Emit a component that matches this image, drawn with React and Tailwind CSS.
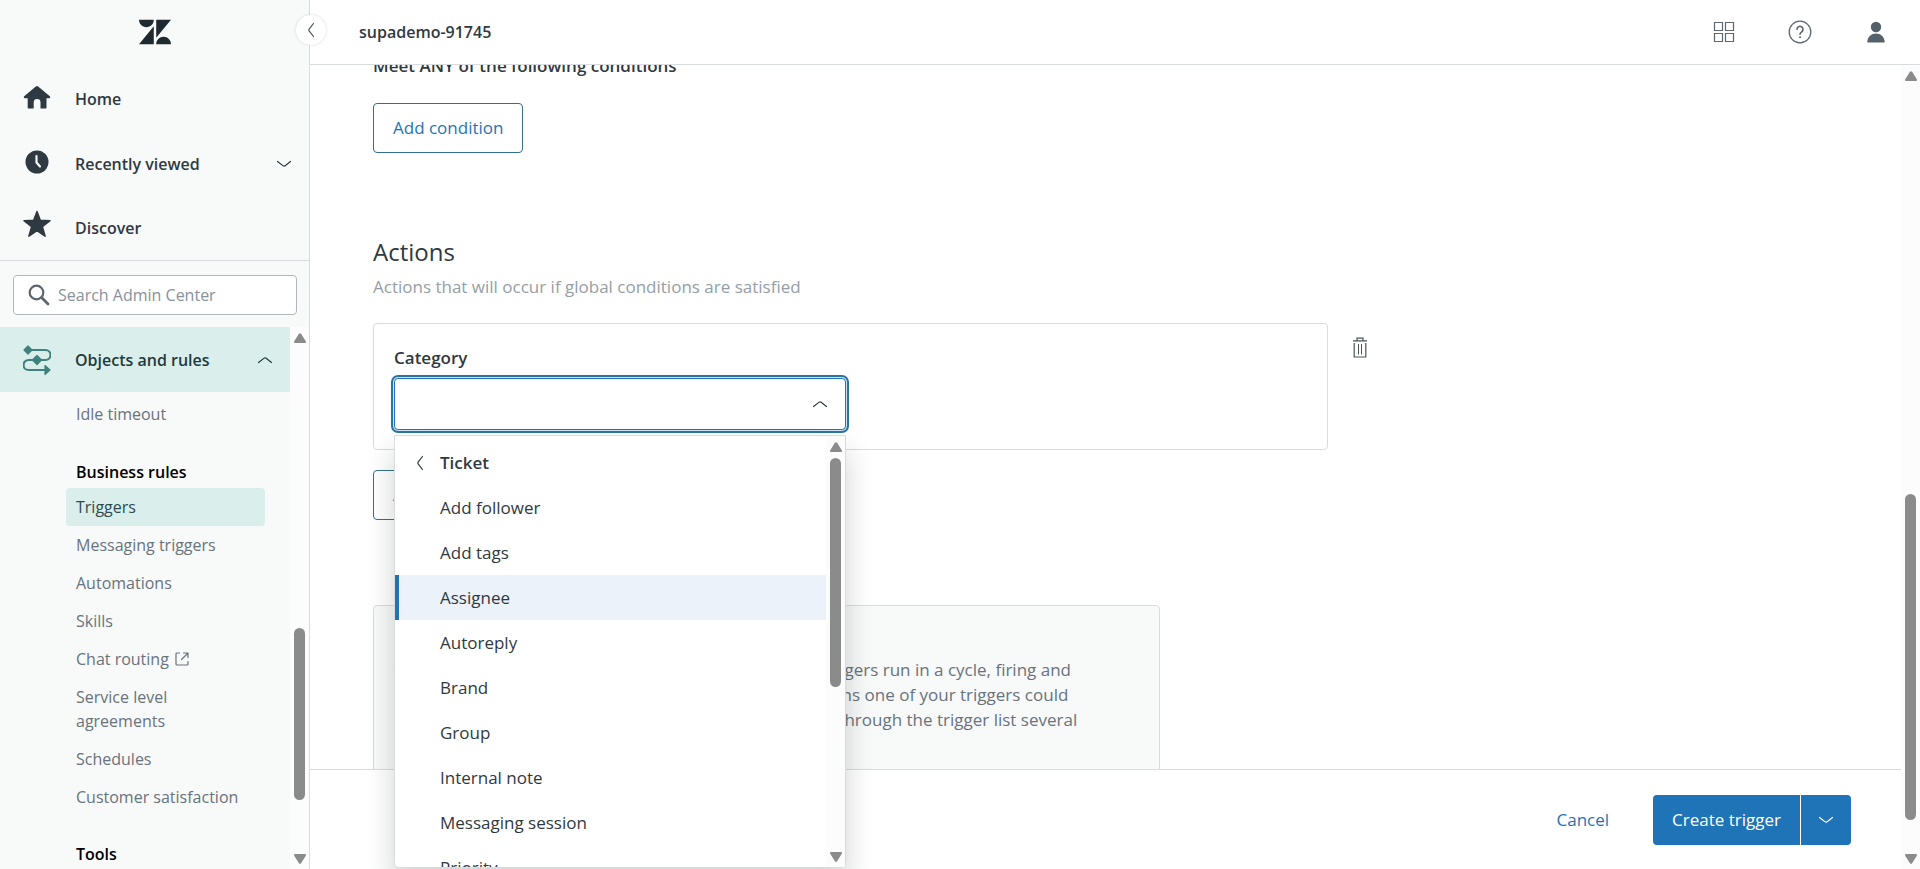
import { useState } from 'react';
import { SiZendesk } from 'react-icons/si';
import clsx from 'clsx';

const businessRules = [
  { label: 'Triggers', active: true },
  { label: 'Messaging triggers' },
  { label: 'Automations' },
  { label: 'Skills' },
  { label: 'Chat routing', external: true },
  { label: 'Service level agreements' },
  { label: 'Schedules' },
  { label: 'Customer satisfaction' },
];

const ticketActions = [
  'Add follower',
  'Add tags',
  'Assignee',
  'Autoreply',
  'Brand',
  'Group',
  'Internal note',
  'Messaging session',
  'Priority',
];

function Chevron({ direction = 'down', className }) {
  const paths = {
    down: 'M1.5 5.5 L7.2 9.9 Q8 10.5 8.8 9.9 L14.5 5.5',
    up: 'M1.5 10.5 L7.2 6.1 Q8 5.5 8.8 6.1 L14.5 10.5',
    left: 'M10.5 1.5 L6.1 7.2 Q5.5 8 6.1 8.8 L10.5 14.5',
  };
  return (
    <svg viewBox="0 0 16 16" className={clsx('size-4 shrink-0', className)} fill="none" stroke="currentColor" strokeWidth="1.2" strokeLinecap="round" aria-hidden="true">
      <path d={paths[direction]} />
    </svg>
  );
}

function HomeIcon() {
  return (
    <svg viewBox="0 0 28 28" className="size-7" fill="#2f3941" aria-hidden="true">
      <path d="M12.8 1.5a1.8 1.8 0 0 1 2.4 0l11.6 9.7c.9.8.4 2-.7 2H23.5v9.3c0 .6-.4 1-1 1h-5v-6a3.4 3.4 0 0 0-6.8 0v6h-5c-.6 0-1-.4-1-1v-9.3H1.9c-1.1 0-1.6-1.2-.7-2z" />
    </svg>
  );
}

function ClockIcon() {
  return (
    <svg viewBox="0 0 24 28" className="h-7 w-6" aria-hidden="true">
      <circle cx="12" cy="12" r="11.5" fill="#2f3941" />
      <path d="M11.5 6v6.500l3.500 4" fill="none" stroke="#f8f9f9" strokeWidth="2.2" strokeLinecap="round" strokeLinejoin="round" />
    </svg>
  );
}

function StarIcon() {
  return (
    <svg viewBox="0 0 28 28" className="-mt-2 size-7" fill="#2f3941" stroke="#2f3941" strokeWidth="1.5" strokeLinejoin="round" aria-hidden="true">
      <path d="M14 1.500l3.300 8.800 9.700.4-7.600 6 2.700 9.500L14 20.700l-8.100 5.500 2.700-9.500-7.600-6 9.700-.4z" />
    </svg>
  );
}

function RulesIcon() {
  return (
    <svg viewBox="0 0 28 30" className="h-[30px] w-7" fill="#3f827f" aria-hidden="true">
      <path d="M5 5h17.500a4.500 4.500 0 0 1 0 10H5.500a5 5 0 0 0 0 10H22" fill="none" stroke="#3f827f" strokeWidth="2.2" />
      <path d="M5 1L9 5 5 9 1 5zM14 10.500l4.500 4.500-4.500 4.500-4.500-4.500zM22 20.500l5 4.500-5 4.500z" stroke="#3f827f" strokeWidth="1.2" strokeLinejoin="round" />
    </svg>
  );
}

function ExternalIcon() {
  return (
    <svg viewBox="0 0 14 14" className="size-[14px]" fill="none" stroke="currentColor" strokeWidth="1.2" strokeLinecap="round" aria-hidden="true">
      <path d="M4.500 1H2a1 1 0 0 0-1 1v10a1 1 0 0 0 1 1h10a1 1 0 0 0 1-1V9.500M8.500 1H13v4.500M12.500 1.500L6.500 7.500" />
    </svg>
  );
}

function TrashIcon() {
  return (
    <svg viewBox="0 0 14 21" className="h-[21px] w-[14px]" fill="none" stroke="#49545c" strokeWidth="1.2" aria-hidden="true">
      <path d="M0 3.800h14M4 3.500V1.200h6v2.300M1.200 6v14h11.600V6" />
      <path d="M5.500 7v10.500M8.500 7v10.500" strokeWidth="1" />
    </svg>
  );
}

function Arrow({ down }) {
  return (
    <svg viewBox="0 0 12 10" className={clsx('h-[10px] w-3', down && 'rotate-180')} fill="#8b8b8b" aria-hidden="true">
      <path d="M4.900.8a1.300 1.300 0 0 1 2.200 0L11.800 8.300c.4.8 0 1.700-.9 1.700H1.100C.2 10-.2 9.100.2 8.300z" />
    </svg>
  );
}

function Scrollbar({ top, size }) {
  return (
    <div className="flex w-[19px] shrink-0 flex-col items-center bg-[#fcfcfc]">
      <div className="flex h-5 items-center pt-0.5"><Arrow /></div>
      <div className="relative w-[11px] flex-1">
        <div className="absolute w-full rounded-full bg-[#8b8b8b]" style={{ top: `${top}%`, height: `${size}%` }} />
      </div>
      <div className="flex h-5 items-center"><Arrow down /></div>
    </div>
  );
}

function Sidebar() {
  return (
    <aside className="relative z-20 flex w-[310px] shrink-0 flex-col border-r border-[#d8dcde] bg-[#f8f9f9] text-base">
      <div className="flex h-[66px] shrink-0 items-center justify-center pb-0.5">
        <SiZendesk className="size-8 text-[#1f2a30]" title="Zendesk" />
      </div>
      <button type="button" aria-label="Collapse sidebar" className="absolute -right-[17px] top-[15px] flex size-[30px] items-center justify-center rounded-full bg-white text-[#49545c] shadow-[0_0_3px_rgba(0,0,0,0.15)]">
        <Chevron direction="left" />
      </button>

      <nav className="border-b border-[#d8dcde] font-semibold">
        <a href="#home" className="flex h-[65px] items-center pl-[23px]">
          <span className="w-[52px]"><HomeIcon /></span>
          Home
        </a>
        <a href="#recent" className="flex h-[65px] items-center pl-[23px] pr-[17px]">
          <span className="w-[52px] pl-[2px]"><ClockIcon /></span>
          <span className="flex-1">Recently viewed</span>
          <Chevron />
        </a>
        <a href="#discover" className="flex h-16 items-center pl-[23px]">
          <span className="w-[52px]"><StarIcon /></span>
          Discover
        </a>
      </nav>

      <div className="pb-3 pl-[13px] pr-3 pt-[14px]">
        <label className="flex h-10 items-center gap-2 rounded border border-[#b0b8be] bg-white px-[14px]">
          <svg viewBox="0 0 22 22" className="size-[22px] shrink-0" fill="none" stroke="#5b666e" strokeLinecap="round" aria-hidden="true">
            <circle cx="8.5" cy="8.5" r="6.8" strokeWidth="2.2" />
            <path d="M13.800 13.800L20 20" strokeWidth="2.8" />
          </svg>
          <input type="search" aria-label="Search Admin Center" placeholder="Search Admin Center" className="w-full min-w-0 bg-transparent outline-none placeholder:text-[#87929d]" />
        </label>
      </div>

      <div className="flex min-h-0 flex-1">
        <div className="min-w-0 flex-1 overflow-hidden">
          <button type="button" className="flex h-[65px] w-full items-center bg-[#daeeeb] pl-[23px] pr-[17px] text-left font-semibold text-[#1f3a3f]">
            <span className="w-[52px]"><RulesIcon /></span>
            <span className="flex-1">Objects and rules</span>
            <Chevron direction="up" />
          </button>
          <div className="flex flex-col pl-[66px] pr-[25px] text-[#68737d]">
            <a href="#idle" className="px-[10px] pb-[30px] pt-[10px] leading-6">Idle timeout</a>
            <h2 className="px-[10px] pb-1 pt-1 font-semibold leading-6 text-black">Business rules</h2>
            {businessRules.map((item) => (
              <a
                key={item.label}
                href="#rules"
                className={clsx('rounded px-[10px] py-[7px] leading-6', item.active && 'bg-[#daeeeb] text-[#2f4a50]')}
              >
                {item.external ? (
                  <span className="flex items-center gap-[6px]">{item.label}<ExternalIcon /></span>
                ) : item.label === 'Service level agreements' ? (
                  <span className="block w-[130px]">{item.label}</span>
                ) : (
                  <span className="whitespace-nowrap">{item.label}</span>
                )}
              </a>
            ))}
            <h2 className="px-[10px] pt-[26px] font-semibold leading-6 text-black">Tools</h2>
          </div>
        </div>
        <Scrollbar top={56} size={34.3} />
      </div>
    </aside>
  );
}

function TopBar() {
  return (
    <header className="relative z-10 flex h-[65px] shrink-0 items-center justify-between border-b border-[#d8dcde] bg-white pl-[49px] pr-8">
      <h1 className="text-base font-semibold">supademo-91745</h1>
      <div className="flex items-center gap-[52px] text-[#5b666e]">
        <button type="button" aria-label="Products">
          <svg viewBox="0 0 24 24" className="size-6" fill="none" stroke="currentColor" strokeWidth="1.2" aria-hidden="true">
            <path d="M2.500 2.500h8v8h-8zM13.500 2.500h8v8h-8zM2.500 13.500h8v8h-8zM13.500 13.500h8v8h-8z" />
          </svg>
        </button>
        <button type="button" aria-label="Help">
          <svg viewBox="0 0 24 24" className="size-6" fill="none" stroke="currentColor" strokeWidth="1.3" strokeLinecap="round" aria-hidden="true">
            <circle cx="12" cy="12" r="10.8" />
            <path d="M9 9.200a3 3 0 1 1 4.700 2.600c-1.200.8-1.700 1.400-1.700 2.400" strokeWidth="1.6" />
            <circle cx="12" cy="17.2" r=".7" fill="currentColor" strokeWidth=".6" />
          </svg>
        </button>
        <button type="button" aria-label="Profile" className="flex w-6 justify-center">
          <svg viewBox="0 0 20 22" className="h-[22px] w-5" fill="#55626a" aria-hidden="true">
            <circle cx="10" cy="6" r="5.2" />
            <path d="M1.300 20.500c.6-5 4-8 8.700-8s8.100 3 8.700 8c.1.600-.2 1-.8 1H2.100c-.6 0-.9-.4-.8-1z" />
          </svg>
        </button>
      </div>
    </header>
  );
}

function CategoryMenu() {
  const [active, setActive] = useState('Assignee');

  return (
    <div className="absolute left-0 top-[57px] z-20 flex h-[433px] w-full rounded-b border border-[#d8dcde] bg-white shadow-[0_16px_28px_0_rgba(23,28,32,0.2)]">
      <div className="min-w-0 flex-1 overflow-hidden pt-1">
        <button type="button" className="flex h-[45px] w-full items-center gap-3 pl-[17px] font-semibold">
          <Chevron direction="left" />
          Ticket
        </button>
        <ul role="listbox" aria-label="Ticket">
          {ticketActions.map((action) => (
            <li
              key={action}
              role="option"
              aria-selected={action === active}
              onMouseEnter={() => setActive(action)}
              className={clsx(
                'flex h-[45px] items-center border-l-4 pl-[41px]',
                action === active ? 'border-[#1f73b7] bg-[#ebf2f9]' : 'border-transparent'
              )}
            >
              {action}
            </li>
          ))}
        </ul>
      </div>
      <Scrollbar top={0.5} size={58.7} />
    </div>
  );
}

export default function App() {
  return (
    <div className="flex h-screen overflow-hidden bg-white font-['Open_Sans','Noto_Sans',sans-serif] text-[17px] text-[#2f3941]">
      <Sidebar />
      <div className="flex min-w-0 flex-1 flex-col">
        <TopBar />
        <div className="flex min-h-0 flex-1">
          <div className="flex min-w-0 flex-1 flex-col">
            <main className="min-h-0 flex-1 pl-[63px]">
              <h3 className="-mt-[11px] font-semibold leading-6">Meet ANY of the following conditions</h3>
              <button type="button" className="mt-[25px] h-[50px] rounded border border-[#336f8f] px-[19px] text-[#1f73b7]">
                Add condition
              </button>

              <h2 className="mt-[83px] text-2xl">Actions</h2>
              <p className="mt-[7px] leading-6 text-[#959ea6]">Actions that will occur if global conditions are satisfied</p>

              <div className="mt-6 flex items-start gap-[25px]">
                <div className="h-[127px] w-[955px] rounded border border-[#d8dcde] px-5 pt-[22px]">
                  <label htmlFor="category" className="block font-semibold leading-6">Category</label>
                  <div className="relative mt-2 w-[452px]">
                    <div className="flex h-[52px] items-center rounded border border-[#1f73b7] bg-white pr-[17px] shadow-[0_0_0_1px_#cfe4f5,0_0_0_3px_#2b749f]">
                      <input id="category" type="text" role="combobox" aria-expanded="true" className="h-full min-w-0 flex-1 px-4 outline-none" />
                      <Chevron direction="up" />
                    </div>
                    <CategoryMenu />
                  </div>
                </div>
                <button type="button" aria-label="Remove action" className="mt-[14px]"><TrashIcon /></button>
              </div>

              <button type="button" className="mt-5 h-[50px] rounded border border-[#336f8f] px-[19px] text-[#1f73b7]">
                Add action
              </button>

              <section className="mt-[85px] h-[230px] w-[787px] rounded border border-[#d8dcde] bg-[#f8f9f9] px-5 pt-[51px] leading-[25px] text-[#68737d]">
                <p className="whitespace-nowrap">The order of your triggers is so important because all triggers run in a cycle, firing and</p>
                <p className="whitespace-nowrap">updating the tickets in order from the very top. The actions one of your triggers could</p>
                <p className="whitespace-nowrap">affect another trigger, so any ticket may then be passed through the trigger list several</p>
              </section>
            </main>

            <footer className="relative z-10 flex h-[100px] shrink-0 items-center justify-end gap-11 border-t border-[#d8dcde] bg-white pr-[50px]">
              <button type="button" className="text-[#1f73b7]">Cancel</button>
              <div className="flex h-[50px] gap-px">
                <button type="button" className="rounded-l bg-[#1f73b7] px-[19px] text-white">Create trigger</button>
                <button type="button" aria-label="More options" className="flex w-[50px] items-center justify-center rounded-r bg-[#1f73b7] text-white">
                  <Chevron />
                </button>
              </div>
            </footer>
          </div>
          <Scrollbar top={53.5} size={42.7} />
        </div>
      </div>
    </div>
  );
}
